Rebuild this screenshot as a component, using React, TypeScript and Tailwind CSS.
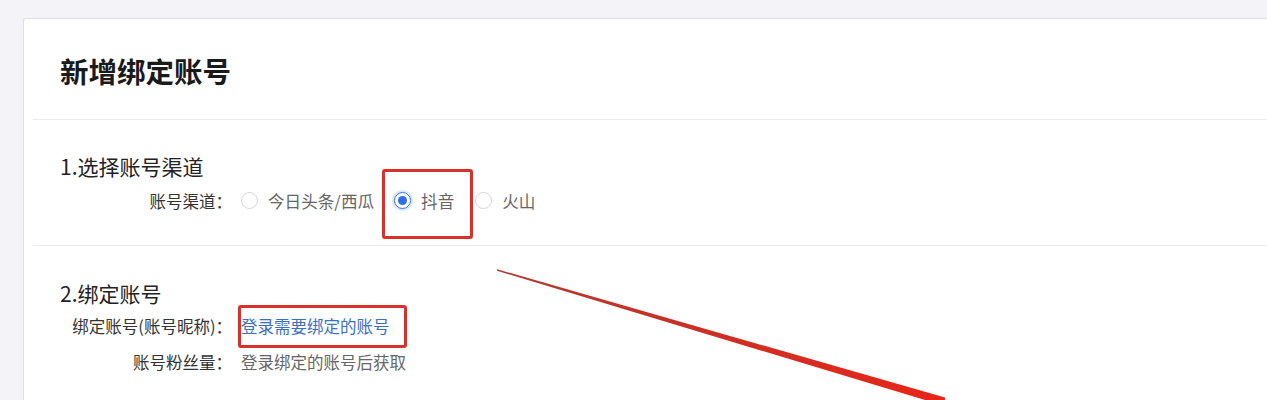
import { FC, ReactNode } from "react";

const FONT = "font-['Noto_Sans_CJK_SC','Noto_Sans',sans-serif]";

const Radio: FC<{ label: string; checked?: boolean }> = ({ label, checked }) => (
  <label className="flex items-center">
    <span
      className={`flex h-[17px] w-[17px] items-center justify-center rounded-full border ${
        checked ? "border-[#2f6fe4] ring-2 ring-[#dbe7fb]" : "border-[#d6d6d6]"
      }`}
    >
      {checked && <span className="h-[9px] w-[9px] rounded-full bg-[#2f6fe4]" />}
    </span>
    <span className="ml-[10px] text-[16.6px] text-[#666]">{label}</span>
  </label>
);

const Row: FC<{ label: string; children: ReactNode; className?: string }> = ({
  label,
  children,
  className = ""
}) => (
  <div className={`flex h-[30px] items-center ${className}`}>
    <div className="w-[172px] text-right text-[16.5px] text-[#333]">{label}</div>
    <div className="ml-[9px] flex items-center">{children}</div>
  </div>
);

export default function App() {
  return (
    <div className={`relative h-[400px] overflow-hidden bg-[#f4f4f8] pl-[23px] pt-[18px] ${FONT}`}>
      <div className="h-[420px] w-[1280px] rounded-tl-[3px] border-l border-t border-[#dedee4] bg-white px-[9px]">
        {/* header */}
        <div className="h-[101px] border-b border-[#ececf0] pl-[27px] pt-[33px]">
          <h1 className="text-[28.5px] font-bold leading-[38px] text-[#1a1a1a]">新增绑定账号</h1>
        </div>

        {/* step 1 */}
        <div className="h-[126px] border-b border-[#ececf0] pl-[27px] pt-[34px]">
          <h2 className="text-[21px] leading-[24px] text-[#222]">1.选择账号渠道</h2>
          <Row label="账号渠道：" className="mt-[8px]">
            <Radio label="今日头条/西瓜" />
            <div className="relative ml-[20px]">
              <Radio label="抖音" checked />
              <div className="pointer-events-none absolute left-[-12px] top-[-20px] h-[70px] w-[91px] rounded-[3px] border-[3px] border-[#d8302a]" />
            </div>
            <div className="ml-[21px]">
              <Radio label="火山" />
            </div>
          </Row>
        </div>

        {/* step 2 */}
        <div className="pl-[27px] pt-[35px]">
          <h2 className="text-[21px] leading-[24px] text-[#222]">2.绑定账号</h2>
          <Row label="绑定账号(账号昵称)：" className="mt-[6px]">
            <div className="relative">
              <a className="cursor-pointer text-[16.5px] text-[#3b6fc2]">登录需要绑定的账号</a>
              <div className="pointer-events-none absolute left-[-3px] top-[-9px] h-[43px] w-[169px] rounded-[3px] border-[3px] border-[#d8302a]" />
            </div>
          </Row>
          <Row label="账号粉丝量：" className="mt-[6px]">
            <span className="text-[16.5px] text-[#666]">登录绑定的账号后获取</span>
          </Row>
        </div>
      </div>

      {/* annotation arrow */}
      <svg className="pointer-events-none absolute left-0 top-0" width="1267" height="400" viewBox="0 0 1267 400">
        <defs>
          <linearGradient id="arrow" x1="497" y1="270" x2="950" y2="400" gradientUnits="userSpaceOnUse">
            <stop offset="0" stopColor="#b2392d" />
            <stop offset="1" stopColor="#ea2419" />
          </linearGradient>
        </defs>
        <polygon points="497,269.2 945,397.5 945,406 497,270.8" fill="url(#arrow)" />
      </svg>
    </div>
  );
}
